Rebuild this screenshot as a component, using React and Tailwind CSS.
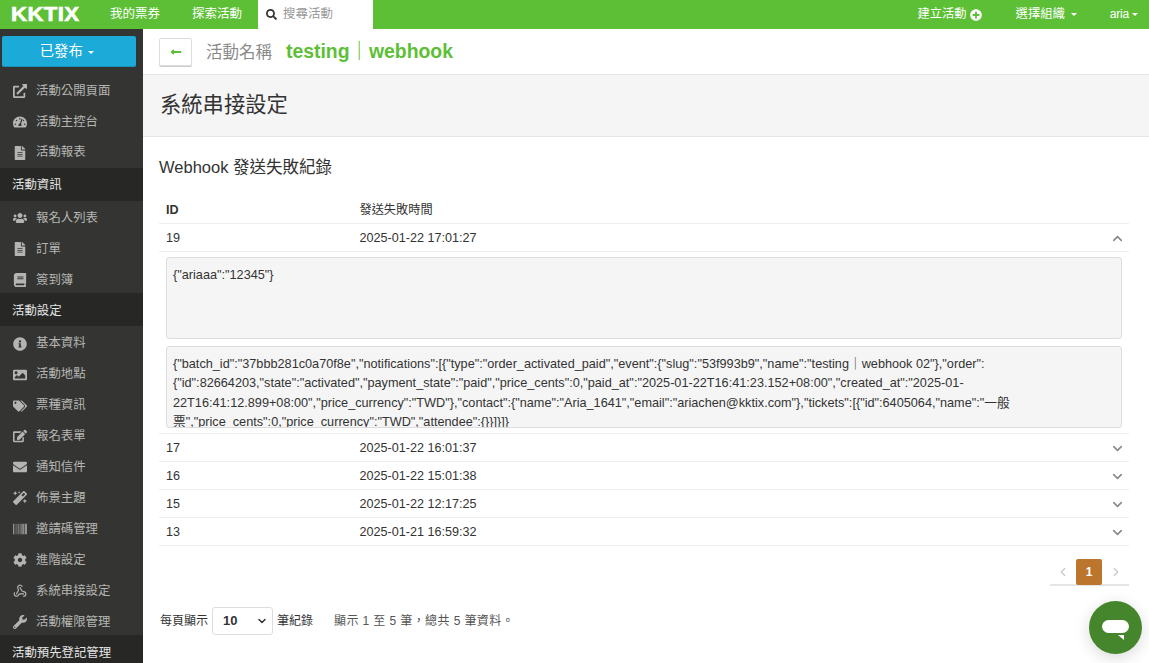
import React from 'react';
import {
  FaExternalLinkAlt, FaTachometerAlt, FaFileAlt, FaUsers, FaBook, FaInfoCircle, FaImage, FaTags,
  FaEdit, FaEnvelope, FaMagic, FaBarcode, FaCog, FaWrench, FaSearch, FaPlusCircle, FaLongArrowAltLeft,
} from 'react-icons/fa';
import { ChevronDown, ChevronUp, ChevronLeft, ChevronRight, Webhook } from 'lucide-react';

const font = "font-['Liberation_Sans','Noto_Sans_CJK_TC',sans-serif]";

const sidebar = [
  { icon: FaExternalLinkAlt, label: '活動公開頁面' },
  { icon: FaTachometerAlt, label: '活動主控台' },
  { icon: FaFileAlt, label: '活動報表' },
  { section: '活動資訊' },
  { icon: FaUsers, label: '報名人列表' },
  { icon: FaFileAlt, label: '訂單' },
  { icon: FaBook, label: '簽到簿' },
  { section: '活動設定' },
  { icon: FaInfoCircle, label: '基本資料' },
  { icon: FaImage, label: '活動地點' },
  { icon: FaTags, label: '票種資訊' },
  { icon: FaEdit, label: '報名表單' },
  { icon: FaEnvelope, label: '通知信件' },
  { icon: FaMagic, label: '佈景主題' },
  { icon: FaBarcode, label: '邀請碼管理' },
  { icon: FaCog, label: '進階設定' },
  { icon: Webhook, label: '系統串接設定' },
  { icon: FaWrench, label: '活動權限管理' },
  { section: '活動預先登記管理' },
];

const Caret = () => (
  <span className="inline-block h-0 w-0 border-x-[3px] border-t-[3px] border-x-transparent border-t-current align-middle" />
);

const Row = ({ id, time, open }) => (
  <div className="flex h-[28px] items-center border-b border-[#eeeeee] pl-[7px] pr-[4px] pt-[1px] text-[12.6px] text-[#333333]">
    <span className="w-[193.5px]">{id}</span>
    <span className="flex-1">{time}</span>
    {open ? <ChevronUp size={15} strokeWidth={2.5} className="text-[#888888]" /> : <ChevronDown size={15} strokeWidth={2.5} className="text-[#888888]" />}
  </div>
);

const App = () => (
  <div className={`${font} flex h-[663px] flex-col overflow-hidden bg-white`}>
    {/* Top bar */}
    <div className="flex h-[29px] shrink-0 items-center bg-[#5dbf36] text-[12.3px] text-white">
      <span className="ml-[11px] w-[99px]">
        <span className="inline-block origin-left scale-x-[1.14] text-[19.5px] font-bold tracking-[0.3px] [-webkit-text-stroke:0.6px_white]">KKTIX</span>
      </span>
      <span className="w-[82px] text-[12.5px]">我的票券</span>
      <span className="w-[66px] text-[12.5px]">探索活動</span>
      <div className="flex h-full w-[115px] items-center gap-[6px] bg-white pl-[8px] text-[12.5px] text-[#999999]">
        <FaSearch size={11} className="text-[#333333]" />
        <span>搜尋活動</span>
      </div>
      <div className="ml-auto flex items-center pr-[11px]">
        <span>建立活動</span>
        <FaPlusCircle size={12} className="ml-[3px]" />
        <span className="ml-[34px]">選擇組織</span>
        <span className="ml-[6px] flex"><Caret /></span>
        <span className="ml-[33px] pb-[2px] text-[12px] tracking-[-0.2px]">aria</span>
        <span className="ml-[3px] flex"><Caret /></span>
      </div>
    </div>

    <div className="flex min-h-0 flex-1">
      {/* Sidebar */}
      <div className="w-[143px] shrink-0 overflow-hidden bg-[#343532] text-[12.4px] text-[#b4b5b3]">
        <div className="h-[46px] px-[1.5px] pt-[7px]">
          <div className="flex h-[31px] w-[134.5px] items-center justify-center gap-[5px] rounded-[2px] border-b border-[#1892bb] bg-[#1caad9] pr-[4px] pt-[2px] text-[14.3px] text-white">
            已發布<Caret />
          </div>
        </div>
        {sidebar.map((item, i) =>
          item.section ? (
            <div key={i} className="flex h-[33px] items-center bg-[#272825] pl-[12px] pt-[3px] text-[#e4e4e4]">{item.section}</div>
          ) : (
            <div key={i} className={`flex h-[30.9px] items-center ${i < 3 ? 'pt-[1px]' : 'pt-[4px]'}`}>
              <span className="flex w-[36px] justify-center pl-[3px]"><item.icon size={14} /></span>
              <span>{item.label}</span>
            </div>
          )
        )}
      </div>

      {/* Main */}
      <div className="flex min-w-0 flex-1 flex-col">
        <div className="flex h-[46px] shrink-0 items-center border-b border-[#e5e5e5] pl-[16px]">
          <div className="flex h-[28px] w-[33px] items-center justify-center rounded-[2px] border border-[#dddddd] text-[#5dbf36] shadow-[0_1px_0_#cccccc]">
            <FaLongArrowAltLeft size={12} />
          </div>
          <span className="ml-[14px] pt-[1px] text-[16.5px] text-[#8a8a8a]">活動名稱</span>
          <span className="ml-[14px] pt-[1px] text-[19.4px] font-bold text-[#5dbf36]">testing｜webhook</span>
        </div>
        <div className="flex h-[62px] shrink-0 items-center border-b border-[#e5e5e5] bg-[#f5f5f5] pl-[17px] pt-[1px] text-[21.3px] text-[#333333]">
          系統串接設定
        </div>

        <div className="px-[16px] pr-[20px]">
          <div className="mt-[18px] text-[16.5px] leading-[24px] text-[#333333]">Webhook 發送失敗紀錄</div>
          <div className="mt-[17px] flex h-[28px] items-center border-b border-[#eeeeee] pl-[7px] pt-[1px] text-[12.6px] font-bold text-[#333333]">
            <span className="w-[193.5px]">ID</span>
            <span className="text-[12.2px] font-normal">發送失敗時間</span>
          </div>
          <Row id="19" time="2025-01-22 17:01:27" open />
          <div className="border-b border-[#eeeeee] px-[7px] pb-[5px] pt-[5px] text-[12.7px] leading-[19.4px] text-[#333333]">
            <div className="h-[82px] rounded-[3px] border border-[#dddddd] bg-[#f5f5f5] px-[6px] pt-[8px]">{'{"ariaaa":"12345"}'}</div>
            <div className="mt-[7px] h-[82px] overflow-hidden rounded-[3px] border border-[#dddddd] bg-[#f5f5f5] px-[6px] pt-[8px] whitespace-nowrap">
              {'{"batch_id":"37bbb281c0a70f8e","notifications":[{"type":"order_activated_paid","event":{"slug":"53f993b9","name":"testing｜webhook 02"},"order":'}
              <br />
              {'{"id":82664203,"state":"activated","payment_state":"paid","price_cents":0,"paid_at":"2025-01-22T16:41:23.152+08:00","created_at":"2025-01-'}
              <br />
              {'22T16:41:12.899+08:00","price_currency":"TWD"},"contact":{"name":"Aria_1641","email":"ariachen@kktix.com"},"tickets":[{"id":6405064,"name":"一般'}
              <br />
              {'票","price_cents":0,"price_currency":"TWD","attendee":{}}]}]}'}
            </div>
          </div>
          <Row id="17" time="2025-01-22 16:01:37" />
          <Row id="16" time="2025-01-22 15:01:38" />
          <Row id="15" time="2025-01-22 12:17:25" />
          <Row id="13" time="2025-01-21 16:59:32" />

          {/* Pagination */}
          <div className="mt-[13px] flex justify-end">
            <div className="flex h-[27px] w-[79px] items-stretch border-b-2 border-[#e5e5e5] text-[#c8c8c8]">
              <span className="flex w-[26px] items-center justify-center"><ChevronLeft size={14} /></span>
              <span className="-mb-[1px] flex w-[26px] items-center justify-center rounded-[2px] bg-[#bb752c] text-[12px] font-bold text-white">1</span>
              <span className="flex w-[27px] items-center justify-center"><ChevronRight size={14} /></span>
            </div>
          </div>

          {/* Page size */}
          <div className="mt-[21px] flex items-center text-[12px] text-[#333333]">
            <span className="pl-[1px]">每頁顯示</span>
            <div className="mx-[4px] flex h-[27.5px] w-[61px] items-center justify-between rounded-[3px] border border-[#dddddd] pl-[10px] pr-[4px] text-[13px] font-bold">
              10
              <ChevronDown size={12} strokeWidth={3} />
            </div>
            <span>筆紀錄</span>
            <span className="ml-[21px] tracking-[0.4px] text-[#555555]">顯示 1 至 5 筆，總共 5 筆資料。</span>
          </div>
        </div>
      </div>
    </div>

    {/* Chat bubble */}
    <div className="absolute left-[1089px] top-[601px] flex h-[53px] w-[53px] items-center justify-center rounded-full bg-[#45852c] shadow-[0_4px_16px_rgba(0,0,0,0.15)]">
      <div className="relative mb-[3px] h-[13px] w-[27px] rounded-full bg-white">
        <span className="absolute right-[5px] top-[15px] h-0 w-0 border-l-[6px] border-t-[5px] border-l-transparent border-t-white" />
      </div>
    </div>
  </div>
);

export default App;
